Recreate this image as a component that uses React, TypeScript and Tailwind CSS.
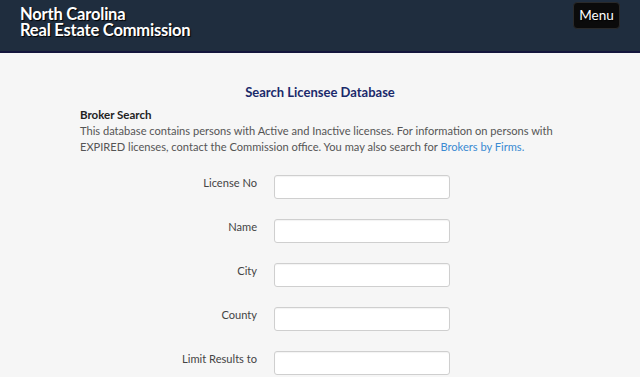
import React from "react";

const fields = ["License No", "Name", "City", "County", "Limit Results to"];

const App: React.FC = () => {
  return (
    <div className="min-h-[377px] bg-[#f6f6f6] font-['Lato',sans-serif] overflow-hidden">
      <header className="h-[53px] bg-[#1f2d3e] border-b-2 border-[#14163d] flex items-start justify-between pl-5 pr-5">
        <div className="pt-[6px] text-white font-bold text-[16.5px] leading-[16px] tracking-[-0.2px] [text-shadow:1px_1px_1px_#000]">
          <div>North Carolina</div>
          <div>Real Estate Commission</div>
        </div>
        <button className="mt-[2px] h-[27px] w-[47px] rounded-[4px] bg-[#0b0b0b] border border-[#2a2a2a] text-white text-[13.5px] leading-none [text-shadow:1px_1px_1px_#000]">
          Menu
        </button>
      </header>

      <main className="px-20 pt-[30px]">
        <h1 className="text-center text-[13px] font-bold text-[#1b2a6b] leading-[18px]">
          Search Licensee Database
        </h1>
        <h2 className="mt-[6px] text-[11.5px] font-bold text-[#222] leading-[16px]">
          Broker Search
        </h2>
        <p className="text-[11.1px] text-[#555] leading-[16px]">
          This database contains persons with Active and Inactive licenses. For information on persons with
          EXPIRED licenses, contact the Commission office. You may also search for{" "}
          <a className="text-[#3a8ad2]">Brokers by Firms.</a>
        </p>

        <form className="mt-[20px] flex flex-col gap-[20px]">
          {fields.map((label) => (
            <div key={label} className="flex items-start">
              <label className="w-[194px] pr-[17px] text-right text-[11.1px] text-[#444] leading-[16px]">
                {label}
              </label>
              <input
                type="text"
                className="w-[176px] h-[24px] bg-white border border-[#cfcfcf] rounded-[3px] shadow-[inset_0_1px_1px_rgba(0,0,0,0.05)]"
              />
            </div>
          ))}
        </form>
      </main>
    </div>
  );
};

export default App;
